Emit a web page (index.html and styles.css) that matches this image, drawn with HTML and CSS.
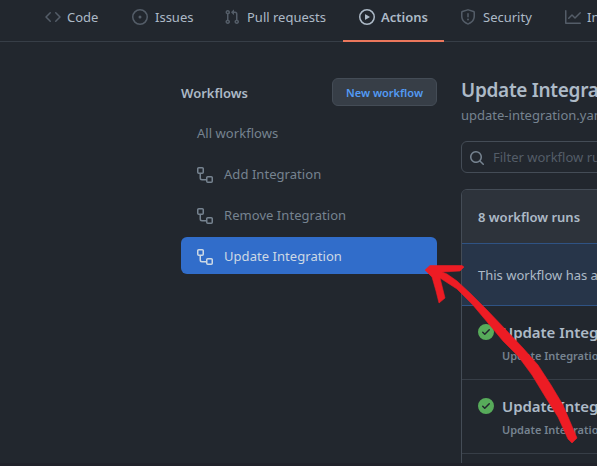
FILE: index.html
```html
<!DOCTYPE html>
<html lang="en">
<head>
<meta charset="utf-8">
<title>Actions</title>
<link rel="stylesheet" href="styles.css">
</head>
<body>
<svg width="0" height="0" class="defs">
  <symbol id="flow" viewBox="0 0 16 16"><path fill-rule="evenodd" d="M0 1.75C0 .784.784 0 1.75 0h3.5C6.216 0 7 .784 7 1.75v3.5A1.75 1.75 0 015.25 7H4v4a1 1 0 001 1h4v-1.25C9 9.784 9.784 9 10.75 9h3.5c.966 0 1.75.784 1.75 1.75v3.5A1.75 1.75 0 0114.25 16h-3.5A1.75 1.75 0 019 14.25v-.75H5A2.5 2.5 0 012.5 11V7h-.75A1.75 1.75 0 010 5.25v-3.5zm1.75-.25a.25.25 0 00-.25.25v3.5c0 .138.112.25.25.25h3.5a.25.25 0 00.25-.25v-3.5a.25.25 0 00-.25-.25h-3.5zm9 9a.25.25 0 00-.25.25v3.5c0 .138.112.25.25.25h3.5a.25.25 0 00.25-.25v-3.5a.25.25 0 00-.25-.25h-3.5z"/></symbol>
  <symbol id="check" viewBox="0 0 16 16"><path fill-rule="evenodd" d="M8 16A8 8 0 108 0a8 8 0 000 16zm3.78-9.72a.75.75 0 00-1.06-1.06L6.75 9.19 5.28 7.72a.75.75 0 00-1.06 1.06l2 2a.75.75 0 001.06 0l4.5-4.5z"/></symbol>
</svg>
<nav class="tabs">
  <a class="tab code"><svg viewBox="0 0 16 16"><path fill-rule="evenodd" d="M4.72 3.22a.75.75 0 011.06 1.06L2.06 8l3.72 3.72a.75.75 0 11-1.06 1.06L.47 8.53a.75.75 0 010-1.06l4.25-4.25zm6.56 0a.75.75 0 10-1.06 1.06L13.94 8l-3.72 3.72a.75.75 0 101.06 1.06l4.25-4.25a.75.75 0 000-1.06l-4.25-4.25z"/></svg><span>Code</span></a>
  <a class="tab issues"><svg viewBox="0 0 16 16"><path d="M8 9.5a1.5 1.5 0 100-3 1.5 1.5 0 000 3z"/><path fill-rule="evenodd" d="M8 0a8 8 0 100 16A8 8 0 008 0zM1.5 8a6.5 6.5 0 1113 0 6.5 6.5 0 01-13 0z"/></svg><span>Issues</span></a>
  <a class="tab pulls"><svg viewBox="0 0 16 16"><path fill-rule="evenodd" d="M7.177 3.073L9.573.677A.25.25 0 0110 .854v4.792a.25.25 0 01-.427.177L7.177 3.427a.25.25 0 010-.354zM3.75 2.5a.75.75 0 100 1.5.75.75 0 000-1.5zm-2.25.75a2.25 2.25 0 113 2.122v5.256a2.251 2.251 0 11-1.5 0V5.372A2.25 2.25 0 011.5 3.25zM11 2.5h-1V4h1a1 1 0 011 1v5.628a2.251 2.251 0 101.5 0V5A2.5 2.5 0 0011 2.5zm1 10.25a.75.75 0 111.5 0 .75.75 0 01-1.5 0zM3.75 12a.75.75 0 100 1.5.75.75 0 000-1.5z"/></svg><span>Pull requests</span></a>
  <a class="tab actions"><svg viewBox="0 0 16 16"><path fill-rule="evenodd" d="M1.5 8a6.5 6.5 0 1113 0 6.5 6.5 0 01-13 0zM8 0a8 8 0 100 16A8 8 0 008 0zM6.379 5.227A.25.25 0 006 5.442v5.117a.25.25 0 00.379.214l4.264-2.559a.25.25 0 000-.428L6.379 5.227z"/></svg><span>Actions</span></a>
  <a class="tab security"><svg viewBox="0 0 16 16"><path fill-rule="evenodd" d="M7.467.133a1.75 1.75 0 011.066 0l5.25 1.68A1.75 1.75 0 0115 3.48V7c0 1.566-.32 3.182-1.303 4.682-.983 1.498-2.585 2.813-5.032 3.855a1.7 1.7 0 01-1.33 0c-2.447-1.042-4.049-2.357-5.032-3.855C1.32 10.182 1 8.566 1 7V3.48a1.75 1.75 0 011.217-1.667l5.25-1.68zm.61 1.429a.25.25 0 00-.153 0l-5.25 1.68a.25.25 0 00-.174.238V7c0 1.358.275 2.666 1.057 3.86.784 1.194 2.121 2.34 4.366 3.297a.2.2 0 00.154 0c2.245-.956 3.582-2.104 4.366-3.298C13.225 9.666 13.5 8.36 13.5 7V3.48a.25.25 0 00-.174-.237l-5.25-1.68zM9 10.5a1 1 0 11-2 0 1 1 0 012 0zm-.25-5.75a.75.75 0 10-1.5 0v3a.75.75 0 001.5 0v-3z"/></svg><span>Security</span></a>
  <a class="tab insights"><svg viewBox="0 0 16 16"><path fill-rule="evenodd" d="M1.5 1.75a.75.75 0 00-1.5 0v12.5c0 .414.336.75.75.75h14.5a.75.75 0 000-1.5H1.5V1.75zm14.28 2.53a.75.75 0 00-1.06-1.06L10 7.94 7.53 5.47a.75.75 0 00-1.06 0L3.22 8.72a.75.75 0 001.06 1.06L7 7.06l2.47 2.47a.75.75 0 001.06 0l5.25-5.25z"/></svg><span>Insights</span></a>
</nav>
<div class="layout">
  <aside class="sidebar">
    <div class="side-head"><h2><span>Workflows</span></h2><button><span>New workflow</span></button></div>
    <a class="item"><span>All workflows</span></a>
    <a class="item"><svg><use href="#flow"/></svg><span>Add Integration</span></a>
    <a class="item"><svg><use href="#flow"/></svg><span>Remove Integration</span></a>
    <a class="item selected"><svg><use href="#flow"/></svg><span>Update Integration</span></a>
  </aside>
  <main class="content">
    <h1><span>Update Integration</span></h1>
    <p class="file"><span>update-integration.yaml</span></p>
    <div class="filter"><svg viewBox="0 0 16 16"><path fill-rule="evenodd" d="M11.5 7a4.499 4.499 0 11-8.998 0A4.499 4.499 0 0111.5 7zm-.82 4.74a6 6 0 111.06-1.06l3.04 3.04a.75.75 0 11-1.06 1.06l-3.04-3.04z"/></svg><span>Filter workflow runs</span></div>
    <section class="runs">
      <header><span>8 workflow runs</span></header>
      <div class="notice"><span>This workflow has a workflow_dispatch event trigger.</span></div>
      <article class="run"><svg><use href="#check"/></svg><div><h3><span>Update Integration</span></h3><p><b>Update Integration</b> #8</p></div></article>
      <article class="run"><svg><use href="#check"/></svg><div><h3><span>Update Integration</span></h3><p><b>Update Integration</b> #7</p></div></article>
    </section>
  </main>
</div>
<svg class="arrow" viewBox="0 0 597 466"><path d="M425 270L430 265.500L462 265.500L464 267L460 271L442 272L447 274L457 281L470 293L487 310L507 331L523 348L538 365L551 385L563 405L577 438L572 443L568 439L558 417L546 398L532 375L518 356L503 341L488 323L472 304L457 289L440 278L445 298L439 303L436 291L432 277Z"/></svg>
<div class="edge"></div>
</body>
</html>
```
FILE: styles.css
```css
* { box-sizing: border-box; }
body { margin: 0; width: 597px; height: 466px; overflow: hidden; position: relative; background: #22272e; color: #adbac7; font: 13px/20px "Noto Sans", "Open Sans", sans-serif; }
h1, h2, h3, p { margin: 0; }
svg { width: 16px; height: 16px; flex: none; fill: currentColor; }
span { white-space: nowrap; }
.defs { position: absolute; width: 0; height: 0; }
.tabs { display: flex; height: 42px; padding-left: 37px; box-shadow: inset 0 -1px #373e47; overflow: hidden; }
.tab { display: flex; flex: none; height: 42px; padding: 7px 8px 0; gap: 6px; }
.tab svg { margin-top: 2px; color: #545d68; }
.code { width: 87px; }
.issues { width: 92px; gap: 7px; }
.pulls { width: 127px; gap: 7px; }
.actions { width: 101px; padding-left: 16px; border-bottom: 2px solid #ec775c; font-weight: 600; }
.tab.actions svg { color: #adbac7; }
.security { width: 113px; padding-left: 16px; gap: 7px; }
.layout { display: flex; height: 424px; overflow: hidden; }
.sidebar { width: 256px; margin: 36px 24px 0 181px; flex: none; }
.side-head { display: flex; justify-content: space-between; align-items: center; height: 28px; margin-bottom: 8px; }
h2 { font-size: 13px; line-height: 20px; font-weight: 600; padding-top: 2px; }
button { width: 105px; height: 28px; padding: 1px 0 0; border: 1px solid #444c56; border-radius: 6px; background: #373e47; color: #539bf5; font: 600 11px/20px "Noto Sans", sans-serif; }
.item { display: flex; align-items: center; height: 37px; margin-bottom: 4px; padding: 0 16px; gap: 11px; border-radius: 6px; color: #768390; letter-spacing: .05px; }
.item svg { margin-top: 2px; }
.selected { background: #316dca; color: #cdd9e5; }
.content { width: 136px; flex: none; padding-top: 33px; overflow: hidden; }
h1 { font-size: 19px; line-height: 30px; font-weight: 600; letter-spacing: -.3px; }
.file { color: #768390; line-height: 20px; margin-bottom: 16px; }
.filter { display: flex; align-items: center; width: 300px; height: 32px; padding-left: 7px; gap: 8px; border: 1px solid #444c56; border-radius: 6px; color: #545d68; }
.filter svg { color: #768390; margin-top: 1px; }
.runs { width: 300px; margin-top: 16px; border: 1px solid #444c56; border-radius: 6px 6px 0 0; height: 300px; overflow: hidden; }
.runs header { height: 53px; padding: 17px 16px; background: #2d333b; font-weight: 600; }
.notice { height: 63px; padding: 21px 16px; background: #273549; border: solid #2f5384; border-width: 1px 0; }
.run { display: flex; gap: 8px; height: 74px; padding: 15px 16px; border-bottom: 1px solid #373e47; }
.run svg { margin-top: 3px; color: #57ab5a; }
h3 { font-size: 15px; line-height: 22px; font-weight: 600; letter-spacing: -.05px; }
.run p { font-size: 11px; line-height: 18px; margin-top: 4px; color: #768390; white-space: nowrap; }
.run b { font-weight: 600; }
.arrow { position: absolute; left: 0; top: 0; width: 597px; height: 466px; fill: #ed1c24; stroke: #ed1c24; stroke-width: .6; }
.edge { position: absolute; left: 0; bottom: 0; width: 597px; height: 3px; background: #20222a; }
```
